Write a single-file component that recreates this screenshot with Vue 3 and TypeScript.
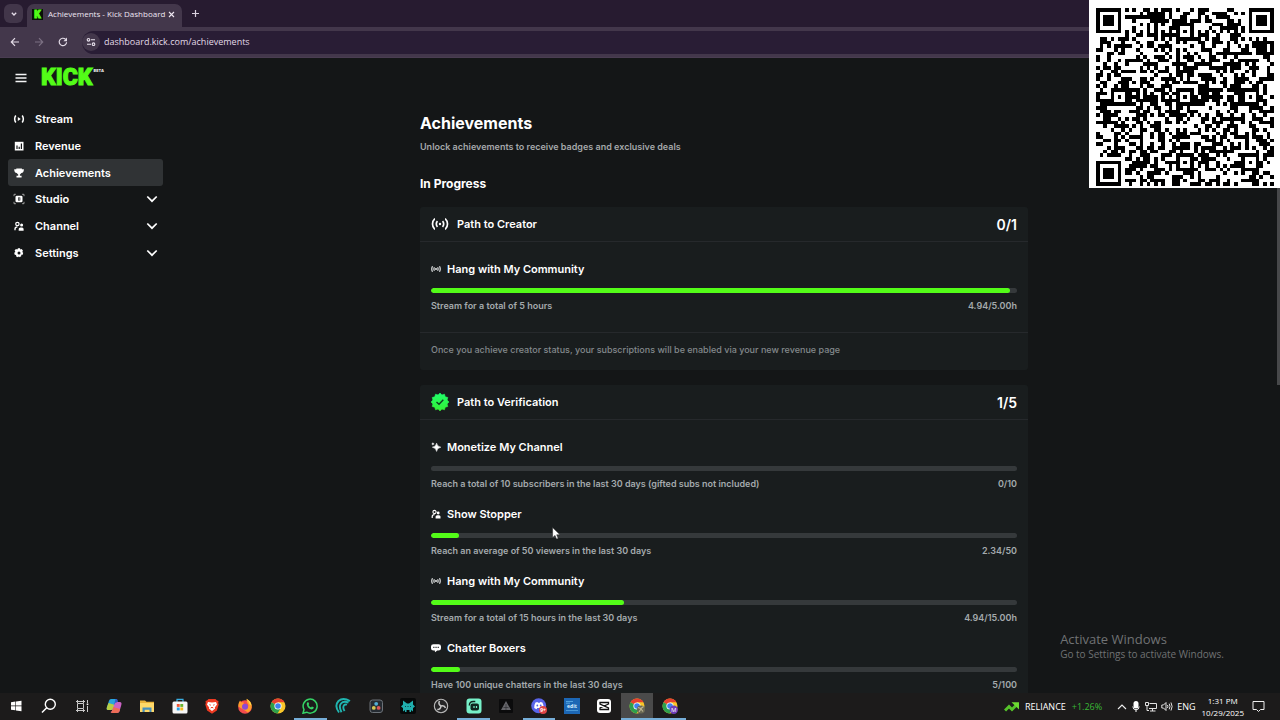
<script setup lang="ts">
interface Goal {
  icon: 'live' | 'spark' | 'people' | 'chat'
  title: string
  detail: string
  value: string
  percent: number
}

interface NavItem {
  label: string
  icon: string
  current?: boolean
  group?: boolean
}

const navItems: NavItem[] = [
  { label: 'Stream', icon: 'stream' },
  { label: 'Revenue', icon: 'revenue' },
  { label: 'Achievements', icon: 'trophy', current: true },
  { label: 'Studio', icon: 'studio', group: true },
  { label: 'Channel', icon: 'people', group: true },
  { label: 'Settings', icon: 'gear', group: true },
]

const creatorGoals: Goal[] = [
  { icon: 'live', title: 'Hang with My Community', detail: 'Stream for a total of 5 hours', value: '4.94/5.00h', percent: 98.8 },
]

const verificationGoals: Goal[] = [
  { icon: 'spark', title: 'Monetize My Channel', detail: 'Reach a total of 10 subscribers in the last 30 days (gifted subs not included)', value: '0/10', percent: 0 },
  { icon: 'people', title: 'Show Stopper', detail: 'Reach an average of 50 viewers in the last 30 days', value: '2.34/50', percent: 4.7 },
  { icon: 'live', title: 'Hang with My Community', detail: 'Stream for a total of 15 hours in the last 30 days', value: '4.94/15.00h', percent: 32.9 },
  { icon: 'chat', title: 'Chatter Boxers', detail: 'Have 100 unique chatters in the last 30 days', value: '5/100', percent: 5 },
]

const cards = [
  { id: 'creator', title: 'Path to Creator', score: '0/1', goals: creatorGoals, note: 'Once you achieve creator status, your subscriptions will be enabled via your new revenue page' },
  { id: 'verification', title: 'Path to Verification', score: '1/5', goals: verificationGoals, note: '' },
]

const QR_SIZE = 49
const ALIGN = [6, 24, 42]

function ring(dx: number, dy: number): number {
  return Math.max(Math.abs(dx), Math.abs(dy))
}

function qrPath(): string {
  let seed = 90417
  const rand = (): number => {
    seed = (seed * 1103515245 + 12345) % 2147483648
    return seed / 2147483648
  }
  const last = QR_SIZE - 4
  const finders = [[3, 3], [last, 3], [3, last]]
  let d = ''
  for (let y = 0; y < QR_SIZE; y++) {
    for (let x = 0; x < QR_SIZE; x++) {
      let dark = rand() > 0.5
      if (x === 6 || y === 6) dark = (x + y) % 2 === 0
      for (const cx of ALIGN) {
        for (const cy of ALIGN) {
          const corner = (cx === 6 && cy !== 24) || (cy === 6 && cx !== 24)
          if (corner) continue
          const r = ring(x - cx, y - cy)
          if (r <= 2) dark = r !== 1
        }
      }
      for (const [fx, fy] of finders) {
        const r = ring(x - fx, y - fy)
        if (r <= 4) dark = r <= 1 || r === 3
      }
      if (dark) d += `M${x} ${y}h1v1h-1z`
    }
  }
  return d
}

const qr = qrPath()
</script>

<template>
  <div class="screen">
    <header class="browser">
      <div class="tabstrip">
        <button class="tab-search" aria-label="Search tabs">
          <svg width="8" height="8" viewBox="0 0 8 8"><path d="M1.800 2.800 4 5l2.200-2.200" fill="none" stroke="#e6deea" stroke-width="1.300" /></svg>
        </button>
        <div class="tab">
          <span class="favicon">K</span>
          <span class="tab-title">Achievements - Kick Dashboard</span>
          <button class="plain" aria-label="Close tab">
            <svg width="7" height="7" viewBox="0 0 7 7"><path d="M1 1l5 5M6 1 1 6" stroke="#efe8f2" stroke-width="1.100" /></svg>
          </button>
        </div>
        <button class="plain new-tab" aria-label="New tab">
          <svg width="9" height="9" viewBox="0 0 9 9"><path d="M4.500 1v7M1 4.500h7" stroke="#d9d0de" stroke-width="1.200" /></svg>
        </button>
      </div>
      <div class="toolbar">
        <button class="plain" aria-label="Back">
          <svg width="10" height="10" viewBox="0 0 10 10"><path d="M9 5H1.500M5 1.200 1.300 5 5 8.800" fill="none" stroke="#e3dbe7" stroke-width="1.200" /></svg>
        </button>
        <button class="plain" aria-label="Forward">
          <svg width="10" height="10" viewBox="0 0 10 10"><path d="M1 5h7.500M5 1.200 8.700 5 5 8.800" fill="none" stroke="#7c7083" stroke-width="1.200" /></svg>
        </button>
        <button class="plain" aria-label="Reload">
          <svg width="10" height="10" viewBox="0 0 10 10"><path d="M8.600 5.200A3.700 3.700 0 1 1 7.500 2.300" fill="none" stroke="#e3dbe7" stroke-width="1.200" /><path d="M9 .6v3.600H5.400z" fill="#e3dbe7" /></svg>
        </button>
        <div class="address">
          <span class="site-info">
            <svg width="10" height="10" viewBox="0 0 10 10" fill="none" stroke="#e9e2ed" stroke-width="1.100"><circle cx="2.500" cy="2.800" r="1.300" /><path d="M5 2.800h4M1 7.200h4" /><circle cx="7.500" cy="7.200" r="1.300" /></svg>
          </span>
          <input class="url" type="text" aria-label="Address" value="dashboard.kick.com/achievements" />
        </div>
      </div>
    </header>

    <div class="app">
      <aside class="sidebar">
        <div class="brand">
          <button class="plain" aria-label="Menu">
            <svg width="12" height="10" viewBox="0 0 12 10"><path d="M.5 1.500h11M.5 5h11M.5 8.500h11" stroke="#f4f5f6" stroke-width="1.400" /></svg>
          </button>
          <a href="#" class="logo">KICK</a><sup class="beta">BETA</sup>
        </div>
        <nav class="nav" aria-label="Main">
          <component
            :is="item.group ? 'button' : 'a'"
            v-for="item in navItems"
            :key="item.label"
            :href="item.group ? undefined : '#'"
            class="nav-item"
            :class="{ current: item.current }"
          >
            <svg class="nav-icon" width="12" height="12" viewBox="0 0 12 12">
              <template v-if="item.icon === 'stream'">
                <path d="M2.800 2.500Q.5 6 2.800 9.500M9.200 2.500Q11.500 6 9.200 9.500" fill="none" stroke="#fff" stroke-width="1.500" />
                <path d="M4.800 4v4l3-2z" fill="#fff" />
              </template>
              <template v-else-if="item.icon === 'revenue'">
                <path d="M1.800 1.800h8.700v8.700H1.800z" fill="#fff" />
                <path d="M4 9V5.500M6.200 9V6.800M8.400 9V3.500" stroke="#141618" stroke-width="1.200" />
              </template>
              <template v-else-if="item.icon === 'trophy'">
                <path d="M3.300 1.500h5.600v.8h2c0 2.400-.9 3.500-2.500 3.800-.4.700-.9 1.100-1.500 1.300v1.400h1.700v1.700H3.500V8.800h1.700V7.400c-.6-.2-1.100-.6-1.500-1.300C2.100 5.800 1.200 4.700 1.200 2.300h2.100z" fill="#fff" />
              </template>
              <template v-else-if="item.icon === 'studio'">
                <path d="M1 3.200V1.300h1.900M9.100 1.300H11v1.900M11 8.800v1.900H9.100M2.900 10.700H1V8.800" fill="none" stroke="#bbb" stroke-width=".8" />
                <rect x="2.500" y="2.800" width="7" height="6.500" rx="1.300" fill="#fff" />
                <path d="M5 4.500h2.300v3H5z" fill="#141618" />
                <circle cx="6.100" cy="6" r=".7" fill="#fff" />
              </template>
              <template v-else-if="item.icon === 'people'">
                <circle cx="4.400" cy="4" r="1.700" fill="none" stroke="#fff" stroke-width="1.200" />
                <path d="M2 10.300V9q0-2 2.400-2.100" fill="none" stroke="#fff" stroke-width="1.300" />
                <circle cx="8.600" cy="5" r="1.500" fill="#fff" />
                <path d="M5.700 10.700V9q0-1.600 1.600-1.600H9Q10.600 7.400 10.600 9v1.700z" fill="#fff" />
              </template>
              <template v-else>
                <path d="M5 1.200h2l.4 1.400 1.300-.5 1.300 1.600-.8 1.200 1 .9-.5 1.900-1.400.1-.1 1.500-1.800.9L6 9.300l-1 1L3.200 9.400l-.1-1.500-1.400-.2-.5-1.900 1.200-.9-.8-1.300 1.300-1.500 1.400.5z" fill="#fff" />
                <circle cx="6" cy="5.900" r="1.500" fill="#141618" />
              </template>
            </svg>
            <span>{{ item.label }}</span>
            <svg v-if="item.group" class="chevron" width="12" height="8" viewBox="0 0 12 8"><path d="M1.300 1.500 6 6.200l4.700-4.700" fill="none" stroke="#fff" stroke-width="1.700" /></svg>
          </component>
        </nav>
      </aside>

      <main class="content">
        <div class="column">
          <h1>Achievements</h1>
          <p class="lead">Unlock achievements to receive badges and exclusive deals</p>
          <h2>In Progress</h2>
          <section v-for="card in cards" :key="card.id" class="card">
            <header class="card-head">
              <svg v-if="card.id === 'creator'" width="18" height="14" viewBox="0 0 18 14" fill="none" stroke="#fff" stroke-width="1.700">
                <path d="M4 2.200H3.500Q1.500 4 1.500 7t2 4.800H4M14 2.200h.5q2 1.800 2 4.800t-2 4.800H14M6.500 4.200Q5.300 5.500 5.300 7t1.200 2.800M11.500 4.200Q12.700 5.500 12.700 7t-1.200 2.800" />
                <circle cx="9" cy="7" r="1.200" fill="#fff" stroke="none" />
              </svg>
              <svg v-else width="18" height="18" viewBox="0 0 18 18">
                <defs><linearGradient id="seal" x1="0" y1="0" x2="0" y2="1"><stop offset="0" stop-color="#1eff6d" /><stop offset="1" stop-color="#35ee32" /></linearGradient></defs>
                <path d="M9 0l1.900 1.900L13.500 1.200l.7 2.600 2.600.7L16.100 7.100 18 9l-1.900 1.900.7 2.600-2.600.7-.7 2.600-2.600-.7L9 18l-1.900-1.900-2.600.7-.7-2.600-2.600-.7.7-2.600L0 9l1.900-1.900L1.200 4.500l2.600-.7.7-2.600 2.600.7z" fill="url(#seal)" stroke="url(#seal)" stroke-width=".6" stroke-linejoin="round" />
                <path d="M5.500 9 8 11.300l4.300-4.500" fill="none" stroke="#103d20" stroke-width="1.400" />
              </svg>
              <h3>{{ card.title }}</h3>
              <span class="score">{{ card.score }}</span>
            </header>
            <ul class="goals">
              <li v-for="goal in card.goals" :key="goal.title" class="goal">
                <h4>
                  <svg width="10" height="10" viewBox="0 0 10 10">
                    <template v-if="goal.icon === 'live'">
                      <path d="M1.500 2.200Q0 5 1.500 7.800M3.400 3.200q-1 1.800 0 3.600M8.500 2.200Q10 5 8.500 7.800M6.600 3.200q1 1.800 0 3.600" fill="none" stroke="#e2e4e5" stroke-width="1.200" />
                      <circle cx="5" cy="5" r=".9" fill="#fff" />
                    </template>
                    <template v-else-if="goal.icon === 'spark'">
                      <path d="M5.600 1.200q.5 3.500 4.200 4-3.700.5-4.200 4.200-.5-3.700-4.200-4.200 3.700-.5 4.200-4z" fill="#fff" stroke="#fff" stroke-width=".6" />
                      <path d="M1.900.3q.2 1.400 1.700 1.600Q2.100 2.100 1.900 3.600 1.700 2.100.3 1.900 1.700 1.700 1.900.3z" fill="#fff" />
                    </template>
                    <template v-else-if="goal.icon === 'people'">
                      <circle cx="3.500" cy="3" r="1.600" fill="none" stroke="#fff" stroke-width="1.100" />
                      <path d="M1.200 9V7.500q0-1.700 2.300-1.800" fill="none" stroke="#fff" stroke-width="1.200" />
                      <circle cx="7.200" cy="4" r="1.400" fill="#fff" />
                      <path d="M4.600 9.400V7.700q0-1.500 1.500-1.500h1.900q1.500 0 1.500 1.500v1.700z" fill="#fff" />
                    </template>
                    <template v-else>
                      <path d="M2.500 1.200h5Q10 1.200 10 3.500v1.700q0 2.300-2.500 2.300H6.300L4 9.300l-.2-1.800H2.500Q0 7.500 0 5.200V3.500q0-2.300 2.500-2.300z" fill="#fff" />
                      <path d="M2.200 3.800h1.300v1.100H2.200zM4.400 3.800h1.300v1.100H4.400zM6.600 3.800h1.300v1.100H6.600z" fill="#34383a" />
                    </template>
                  </svg>
                  {{ goal.title }}
                </h4>
                <div class="track" role="progressbar" :aria-label="goal.title" :aria-valuenow="goal.percent">
                  <div class="fill" :style="{ width: goal.percent + '%' }"></div>
                </div>
                <div class="detail"><span>{{ goal.detail }}</span><span>{{ goal.value }}</span></div>
              </li>
            </ul>
            <p v-if="card.note" class="note">{{ card.note }}</p>
          </section>
        </div>
      </main>
      <div class="scroll-thumb"></div>
      <div class="watermark">
        <div class="wm-title">Activate Windows</div>
        <div class="wm-text">Go to Settings to activate Windows.</div>
      </div>
    </div>

    <footer class="taskbar">
      <div class="apps">
        <button aria-label="Start"><svg viewBox="0 0 16 16"><path d="M3 4.200l4.400-.6v4H3zM8 3.500l5.500-.8v4.900H8zM3 8.300h4.400v4L3 11.700zM8 8.300h5.500v4.900L8 12.400z" fill="#fff" /></svg></button>
        <button aria-label="Search"><svg viewBox="0 0 16 16"><circle cx="9.300" cy="6.200" r="5" fill="none" stroke="#fff" stroke-width="1.400" /><path d="M5.700 9.800 1 14.600" stroke="#fff" stroke-width="1.500" /></svg></button>
        <button aria-label="Task view"><svg viewBox="0 0 16 16" fill="none" stroke="#c9c9c9"><path d="M3.500 5.500h6v5h-6zM2 3.500h9M2 12.500h9M3.500 2v3M9.500 2v3M3.500 11v3M9.500 11v3M13.500 2v3M13.500 8v6" /><path d="M12.700 5.500h1.600v1.600h-1.600z" fill="#fff" stroke="none" /></svg></button>
        <button aria-label="Copilot"><svg viewBox="0 0 16 16"><path d="M5 1h5q1 0 1.400 1.300L8.200 9.500Q7.600 12 5 12H2Q0 12 1 9l2-6.200Q3.500 1 5 1z" fill="#28a5dd" /><path d="M2.500 5 1 9q-1 3 1 3h3q2.600 0 3.200-2.500L9 7z" fill="#b8cf43" /><path d="M6 15h5q2 0 2.500-1.800L15.300 7q.8-3-1.300-3h-3Q9 4 8 7L6.200 12.500Q5.500 14 4.500 14z" fill="#ca63c5" /><path d="M7.300 9 6.200 12.500Q5.500 14 4.500 14L6 15h5q2 0 2.500-1.800l.6-2.200z" fill="#ed6c56" /><path d="M9.500 1h.8q1 0 1.300 1.400L12 4h-1Q9 4 8 7z" fill="#3358cf" /></svg></button>
        <button aria-label="File Explorer"><svg viewBox="0 0 16 16"><path d="M1 2.500h5l1.500 1.300H15V14H1z" fill="#e9b23a" /><path d="M1 5h14v9H1z" fill="#ffd969" /><path d="M3.500 14V9.500h9V14h-2v-2.300H5.700V14z" fill="#4790bd" /></svg></button>
        <button aria-label="Store"><svg viewBox="0 0 16 16"><path d="M5 4V1.300h6V4" fill="none" stroke="#39aee3" stroke-width="1.200" /><rect x=".5" y="3.500" width="15" height="12" rx="1.500" fill="#f6f6f6" /><path d="M4.800 6h2.900v2.900H4.800z" fill="#ef5534" /><path d="M8.300 6h2.900v2.900H8.300z" fill="#69b52f" /><path d="M4.800 9.500h2.900v2.900H4.800z" fill="#249fe5" /><path d="M8.300 9.500h2.900v2.900H8.300z" fill="#f8b91c" /></svg></button>
        <button aria-label="Brave"><svg viewBox="0 0 16 16"><path d="M4.500 1h7L13 2.500l1.500.4-.3 2.200.5 1.500-1.800 6L8 15.800 3.100 12.600l-1.800-6 .5-1.500-.3-2.200L3 2.500z" fill="#ed3a22" /><path d="M4 4 8 4.600 12 4l1 2.500-2.200 3 .3 1L8 13l-3.100-2.500.3-1L3 6.500z" fill="#fff" /><path d="M5.500 6.700l1.300.5M10.500 6.700l-1.300.5M6.700 10 8 9.300l1.300.7" fill="none" stroke="#ed3a22" /></svg></button>
        <button aria-label="Firefox"><svg viewBox="0 0 16 16"><circle cx="8" cy="9" r="6.800" fill="#f24b4d" /><path d="M1.300 8.500C1 5.500 2.500 3.800 3 2.500l1.500 2Q6 4 7 4.800L5 9q3 3.500 6 .5 1-3-1-5L9.500.8q5 2.700 5.200 7 .3 4-3.700 6.600" fill="#ff9c2c" /><circle cx="8" cy="8.800" r="3" fill="#8b4bd5" /><path d="M9.500.8q4.500 2.500 5 7l-1.900-1.500Q12 4 9.500.8z" fill="#ffdc4a" /></svg></button>
        <button aria-label="Chrome"><svg viewBox="0 0 16 16"><use href="#chrome-mark" /></svg></button>
        <button aria-label="WhatsApp" class="running"><svg viewBox="0 0 16 16"><path d="M1 15.200 2 11.500A7 7 0 1 1 4.700 14.200z" fill="none" stroke="#35d366" stroke-width="1.500" /><path d="M5.400 4.200h1l.8 1.800-.7 1q.9 1.700 2.500 2.400l.9-1 1.900.9q0 2-2 2.200Q6 11 4.700 6.500q0-1.500.7-2.300z" fill="#35d366" /></svg></button>
        <button aria-label="Streaming"><svg viewBox="0 0 16 16" fill="none" stroke="#20b5b0" stroke-width="1.900"><path d="M15 3Q8-1 3.500 3q-4.500 5 .5 11.500M13.500 4.500Q8.500 2.500 6 5.500t.5 8.700M12 6.700Q9.500 5.800 8.600 8t1 5" /></svg></button>
        <button aria-label="DaVinci Resolve"><svg viewBox="0 0 16 16"><rect x="2" y="2" width="12.500" height="12.500" rx="2.500" fill="#252b32" stroke="#6c7278" /><circle cx="8.200" cy="5.800" r="1.900" fill="#52afd5" /><circle cx="5.800" cy="9.900" r="1.900" fill="#d3c653" /><circle cx="10.600" cy="9.900" r="1.900" fill="#dc5856" /></svg></button>
        <button aria-label="Filmora"><svg viewBox="0 0 16 16"><rect width="16" height="16" rx="2" fill="#070909" /><path d="M3 2.500l4 3h2l4-3v4l2 2-2 1.500v3.500L11 12v2H9.500v-2h-3v2H5v-2l-2 1.500V10L1 8.500l2-2z" fill="#20afae" /><path d="M5.500 8v1M8 8v1M10.500 8v1" stroke="#0b4446" /></svg></button>
        <button aria-label="OBS Studio"><svg viewBox="0 0 16 16"><circle cx="8" cy="8" r="6.700" fill="#252526" stroke="#b9b9b9" stroke-width="1.100" /><path d="M8 8Q4.800 6 6.500 3M8 8q3.500-1 4.500 2M8 8q-.3 3.500-3.700 3.500" fill="none" stroke="#c6c6c6" stroke-width="1.500" /></svg></button>
        <button aria-label="Streamlabs" class="running"><svg viewBox="0 0 16 16"><rect x=".5" y=".5" width="15" height="15" rx="3" fill="#77f1c9" /><path d="M3.300 7.500q0-4 4-4h2" fill="none" stroke="#10271f" stroke-width="1.300" /><rect x="4.500" y="5.500" width="8.500" height="7" rx="2" fill="#10271f" /><path d="M8 8v2M10.500 8v2" stroke="#77f1c9" stroke-width="1.200" /></svg></button>
        <button aria-label="Triangle"><svg viewBox="0 0 16 16"><rect x="1" y="1" width="14" height="14" rx="1" fill="#0b0b0c" /><path d="M8 3l5 9H3z" fill="#66666b" /><path d="M8 6v6M5.500 9.500h5" stroke="#29292b" stroke-width=".6" /></svg></button>
        <button aria-label="Discord" class="running"><svg viewBox="0 0 16 16"><circle cx="7.700" cy="7.700" r="7.500" fill="#5964e8" /><path d="M4.500 4.500 6.500 4l.5.700h1.800L9.400 4l2 .5q1.600 3 1.300 5.500L10.500 11.200l-.8-1.100H6.300L5.500 11.200 3.200 10q-.2-3 1.300-5.500z" fill="#fff" /><circle cx="6.300" cy="7.500" r=".9" fill="#5964e8" /><circle cx="9.700" cy="7.500" r=".9" fill="#5964e8" /><circle cx="12" cy="12" r="4" fill="#df4546" /><text x="12" y="14" font-size="5" font-weight="700" text-anchor="middle" fill="#fff">9+</text></svg></button>
        <button aria-label="Media encoder"><svg viewBox="0 0 16 16"><rect width="16" height="16" fill="#1c67b5" /><path d="M2 3.500h7M2 5.200h4" stroke="#63b3e9" stroke-width=".8" /><text x="8" y="10.200" font-size="5" font-weight="700" text-anchor="middle" fill="#d9f0ff">edit</text><path d="M2 12.500h12" stroke="#4796d6" /></svg></button>
        <button aria-label="CapCut"><svg viewBox="0 0 16 16"><rect x="1" y="1" width="14" height="14" rx="3" fill="#fff" /><path d="M12.500 6.500v-2H4v1.500l8.500 4v1.500H4v-1.500l8.500-4" fill="none" stroke="#111" stroke-width="1.300" /></svg></button>
        <button aria-label="Chrome profile 1" class="running active"><svg viewBox="0 0 16 16"><use href="#chrome-mark" /><circle cx="12" cy="11.500" r="4" fill="#6b6954" /><path d="M9 9.500l3 1 2.500-2M10 14l2-3 2 2.500" fill="none" stroke="#c0b695" stroke-width="1.200" /></svg></button>
        <button aria-label="Chrome profile 2" class="running"><svg viewBox="0 0 16 16"><use href="#chrome-mark" /><circle cx="11.800" cy="11.800" r="4.200" fill="#6f3db8" /><text x="11.800" y="14" font-size="6" text-anchor="middle" fill="#fff">M</text></svg></button>
      </div>
      <div class="tray">
        <a href="#" class="stock">
          <svg width="15" height="10" viewBox="0 0 15 10"><path d="M1 8.500l4-4 3 3L12.500 3" fill="none" stroke="#55c32a" stroke-width="3" /><path d="M7.500.3H15v7.200z" fill="#6ddb32" /></svg>
          <span>RELIANCE</span><span class="gain">+1.26%</span>
        </a>
        <svg width="10" height="10" viewBox="0 0 10 10"><path d="M1 7l4-4 4 4" fill="none" stroke="#eee" stroke-width="1.100" /></svg>
        <svg width="10" height="13" viewBox="0 0 10 13"><rect x="2.500" y="1" width="5" height="7.500" rx="2.500" fill="#fff" /><path d="M1.800 6.500q.3 3.300 3.200 3.300t3.200-3.300M5 10v2" fill="none" stroke="#fff" /></svg>
        <svg width="12" height="11" viewBox="0 0 12 11" fill="none" stroke="#e2e2e2"><path d="M4.500 2.500h7v5H4M7.500 8v2M5 10h5.500M.5 1.500h3v3h-3zM2 5v4.500h2" /></svg>
        <svg width="12" height="11" viewBox="0 0 12 11" fill="none" stroke="#e2e2e2"><path d="M.8 4h1.700L5 1.500v8L2.500 7H.8zM6.500 4q.8 1.500 0 3M8.200 2.700q1.600 2.800 0 5.600M10 1.500q2.200 4 0 8" /></svg>
        <span>ENG</span>
        <div class="clock"><span>1:31 PM</span><span>10/29/2025</span></div>
        <svg class="notice" width="13" height="13" viewBox="0 0 13 13"><path d="M1 1.500h11v8H8.500l-2 2-2-2H1z" fill="none" stroke="#eee" /></svg>
      </div>
    </footer>

    <svg width="0" height="0" class="symbols" aria-hidden="true">
      <symbol id="chrome-mark" viewBox="0 0 16 16">
        <circle cx="8" cy="8" r="7.500" fill="#f9c62a" />
        <path d="M8 8 1.500 4.200A7.500 7.500 0 0 1 14.500 4.200H8z" fill="#e7402f" />
        <path d="M8 8 1.500 4.200A7.500 7.500 0 0 0 7.500 15.500L11 9.800z" fill="#2da04c" />
        <circle cx="8" cy="8" r="3.600" fill="#fff" /><circle cx="8" cy="8" r="2.800" fill="#3f82ec" />
      </symbol>
    </svg>

    <div class="qr">
      <svg :viewBox="`0 0 ${QR_SIZE} ${QR_SIZE}`" role="img" aria-label="QR code" shape-rendering="crispEdges"><path :d="qr" fill="#000" /></svg>
    </div>

    <svg class="pointer" width="9" height="13" viewBox="0 0 9 13"><path d="M.6.600v10L3 8.400l1.500 3.700 1.700-.7L4.700 7.800H8z" fill="#fff" stroke="#222" stroke-width=".5" /></svg>
  </div>
</template>

<style>
html,
body {
  margin: 0;
  background: #141618;
}
</style>

<style scoped>
* {
  box-sizing: border-box;
}
.screen {
  position: relative;
  display: flex;
  flex-direction: column;
  height: 100vh;
  overflow: hidden;
  color: #fff;
  background: #141617;
  font-family: Inter, "Liberation Sans", sans-serif;
}
svg {
  display: block;
  flex: none;
}
button {
  border: 0;
  padding: 0;
  color: inherit;
  background: none;
  font: inherit;
}
a {
  color: inherit;
  text-decoration: none;
}
h1, h2, h3, h4, p, ul {
  margin: 0;
  padding: 0;
}
.plain {
  display: flex;
}
.browser {
  flex: none;
  background: #271b30;
  color: #eee6f2;
  font-family: "Open Sans", "Noto Sans", sans-serif;
}
.tabstrip {
  display: flex;
  align-items: center;
  height: 27px;
  padding-left: 4px;
}
.tab-search {
  display: grid;
  place-items: center;
  width: 19px;
  height: 19px;
  border-radius: 6px;
  background: #42364a;
}
.tab {
  display: flex;
  align-items: center;
  align-self: flex-end;
  width: 155px;
  height: 23px;
  margin-left: 4px;
  padding: 0 7px 3px 5px;
  border-radius: 7px 7px 0 0;
  background: #43374b;
}
.favicon {
  width: 11px;
  height: 11px;
  background: #071205;
  color: #53fc18;
  font: 900 10px/11px Roboto, sans-serif;
  text-align: center;
  -webkit-text-stroke: 1px #53fc18;
}
.tab-title {
  flex: 1;
  margin-left: 5px;
  font-size: 8px;
  line-height: 12px;
  white-space: nowrap;
}
.new-tab {
  margin-left: 9px;
}
.toolbar {
  display: flex;
  align-items: center;
  gap: 14px;
  height: 31px;
  padding: 0 8px 0 10px;
  background: #43374b;
  border-bottom: 1px solid #4a3d52;
}
.address {
  display: flex;
  flex: 1;
  align-items: center;
  gap: 4px;
  height: 23px;
  border-radius: 12px;
  background: #291d35;
}
.site-info {
  display: grid;
  place-items: center;
  width: 18px;
  height: 18px;
  border-radius: 9px;
  background: #43374b;
}
.url {
  flex: 1;
  min-width: 0;
  padding: 0;
  border: 0;
  outline: 0;
  background: none;
  color: #e2d9e7;
  font: 9px/14px "Open Sans", "Noto Sans", sans-serif;
}
.app {
  position: relative;
  display: flex;
  flex: 1;
  min-height: 0;
  overflow: hidden;
}
.sidebar {
  flex: none;
  width: 168px;
  padding: 0 5px 0 8px;
}
.brand {
  display: flex;
  align-items: center;
  height: 40px;
  padding-left: 7px;
}
.logo {
  margin-left: 14px;
  color: #53fc18;
  font-family: Roboto, sans-serif;
  font-size: 23px;
  font-weight: 900;
  line-height: 24px;
  -webkit-text-stroke: 1px #53fc18;
}
.beta {
  align-self: flex-start;
  margin: 10px 0 0 1px;
  font-size: 4px;
  font-weight: 700;
  line-height: 6px;
}
.nav {
  display: grid;
  grid-template-rows: repeat(6, 1fr);
  height: 160px;
  margin-top: 8px;
}
.nav-item {
  display: flex;
  align-items: center;
  gap: 10px;
  padding: 0 5px;
  border-radius: 3px;
  font-size: 11px;
  font-weight: 600;
  text-align: left;
}
.nav-item.current {
  background: #303335;
}
.chevron {
  margin-left: auto;
}
.content {
  flex: 1;
  min-width: 0;
  overflow: hidden;
}
.column {
  max-width: 608px;
  margin: 0 auto;
  padding-top: 53px;
}
h1 {
  font-size: 16px;
  font-weight: 700;
  line-height: 24px;
}
.lead {
  margin-top: 4px;
  color: #a5a8aa;
  font-size: 9px;
  font-weight: 600;
  line-height: 16px;
}
h2 {
  margin-top: 21px;
  font-size: 12px;
  font-weight: 700;
  line-height: 16px;
}
.card {
  margin-top: 15px;
  border-radius: 3px;
  background: #191d1e;
}
.card-head {
  display: flex;
  align-items: center;
  gap: 8px;
  height: 35px;
  padding: 0 11px;
  border-bottom: 1px solid #26292c;
}
h3 {
  font-size: 11px;
  font-weight: 600;
}
.score {
  margin-left: auto;
  font-size: 14px;
  font-weight: 600;
}
.goals {
  display: grid;
  gap: 15px;
  padding: 19px 11px;
  list-style: none;
}
h4 {
  display: flex;
  align-items: center;
  gap: 6px;
  font-size: 11px;
  font-weight: 600;
  line-height: 16px;
}
.track {
  height: 5px;
  margin-top: 11px;
  border-radius: 3px;
  background: #35393b;
  overflow: hidden;
}
.fill {
  height: 100%;
  border-radius: 3px;
  background: #53fc18;
}
.detail {
  display: flex;
  justify-content: space-between;
  margin-top: 5px;
  color: #a4aaad;
  font-size: 9px;
  font-weight: 600;
  line-height: 15px;
}
.note {
  padding: 9px 11px 12px;
  border-top: 1px solid #26292c;
  color: #83898c;
  font-size: 9px;
  font-weight: 500;
  line-height: 16px;
}
.scroll-thumb {
  position: absolute;
  top: 0;
  right: 0;
  width: 3px;
  height: 327px;
  background: #47484a;
}
.watermark {
  position: absolute;
  right: 56px;
  bottom: 32px;
  color: #707274;
  font-family: "Open Sans", "Noto Sans", sans-serif;
}
.wm-title {
  font-size: 13px;
  line-height: 16px;
}
.wm-text {
  font-size: 10px;
  line-height: 14px;
}
.taskbar {
  display: flex;
  flex: none;
  justify-content: space-between;
  height: 27px;
  background: #1c1b1b;
  font-family: "Open Sans", "Noto Sans", sans-serif;
}
.apps {
  display: grid;
  flex: 0 0 686px;
  grid-template-columns: repeat(21, 1fr);
}
.apps button {
  display: grid;
  place-items: center;
  border-bottom: 2px solid transparent;
}
.apps button svg {
  width: 16px;
  height: 16px;
}
.apps .running {
  border-bottom-color: #76aed8;
}
.apps .active {
  background: #4a4a4a;
}
.tray {
  display: flex;
  align-items: center;
  gap: 4px;
  padding-right: 15px;
  font-size: 9px;
}
.stock {
  display: flex;
  align-items: center;
  gap: 6px;
  margin-right: 11px;
}
.gain {
  color: #39b936;
}
.clock {
  display: grid;
  justify-items: center;
  margin-left: 2px;
  font-size: 8px;
  line-height: 12px;
}
.notice {
  margin-left: 4px;
}
.symbols {
  position: absolute;
}
.qr {
  position: absolute;
  top: 0;
  right: 0;
  padding: 8px 6px 2px 7px;
  background: #fff;
}
.qr svg {
  width: 178px;
  height: 178px;
}
.pointer {
  position: absolute;
  top: 527px;
  left: 552px;
}
</style>
